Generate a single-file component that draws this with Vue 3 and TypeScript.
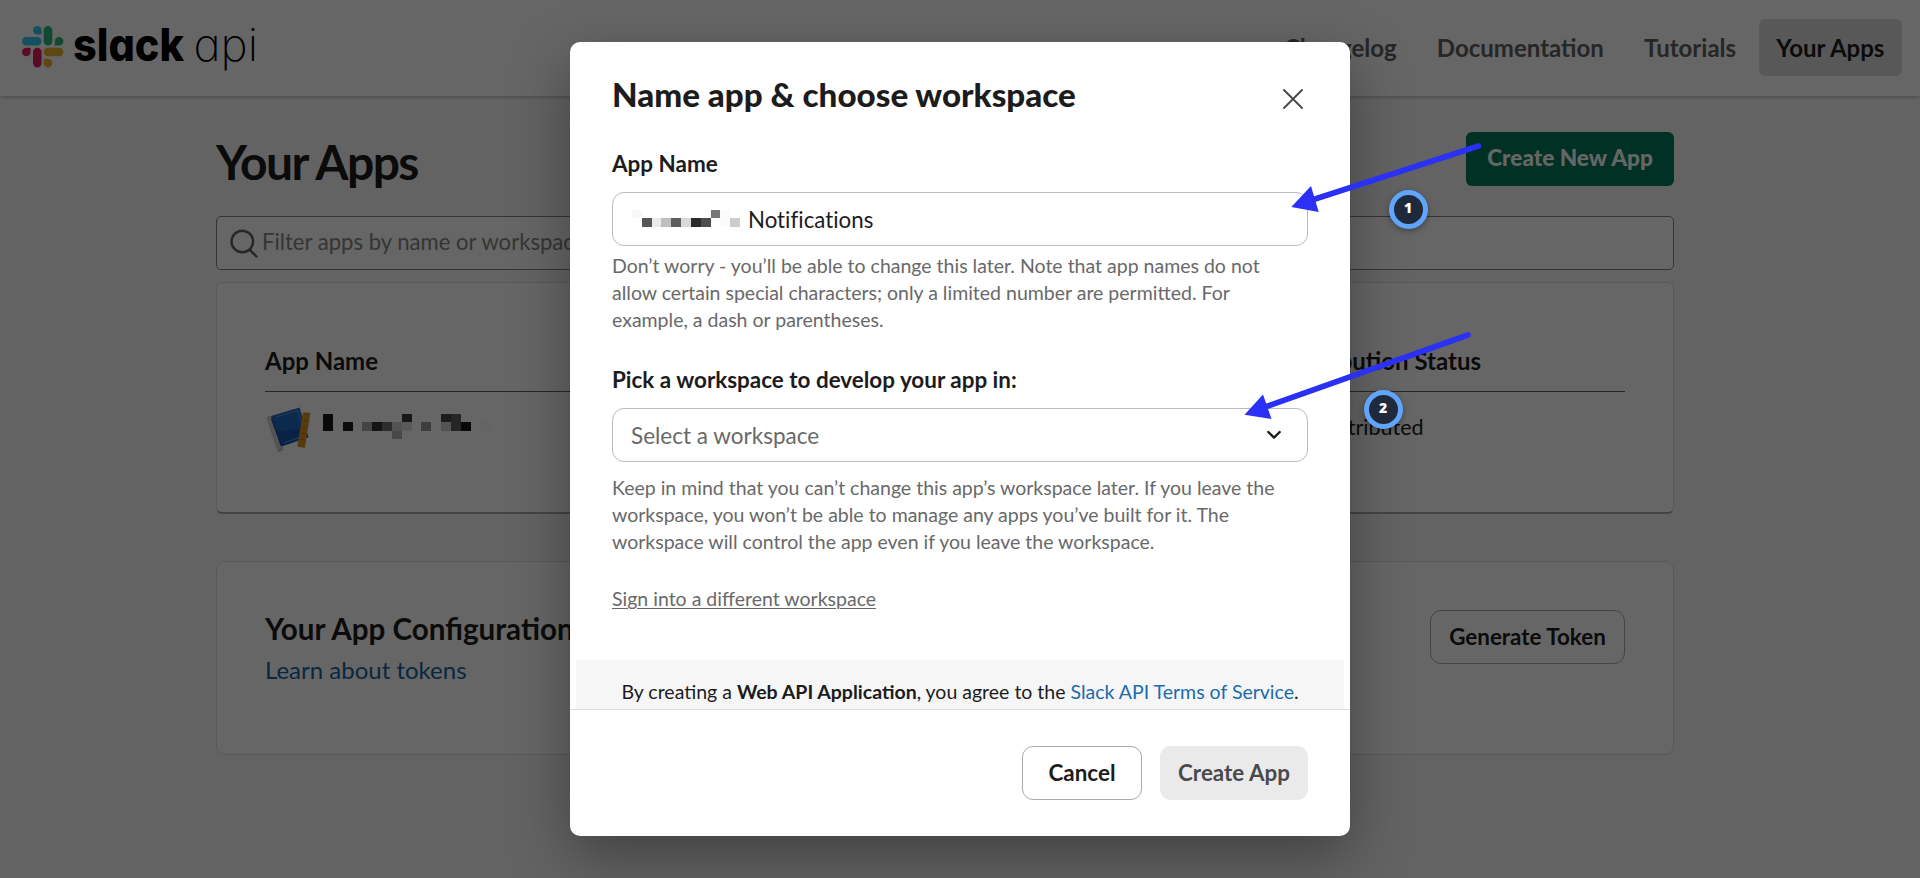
<script setup lang="ts">
import { ref } from 'vue'

type Cell = { x: number; row: number; fill: string }

const navItems = ['Changelog', 'Documentation', 'Tutorials', 'Your Apps']
const activeItem = ref('Your Apps')

const rowTops = [0, 8, 17, 25]

const cell = (x: number, row: number, level: number): Cell => ({
  x,
  row,
  fill: `rgb(${level}, ${level}, ${level})`,
})

const appCells: Cell[] = [
  cell(0, 0, 27), cell(0, 1, 27), cell(20, 1, 30), cell(39, 1, 172), cell(49, 1, 50),
  cell(59, 1, 112), cell(69, 1, 207), cell(69, 2, 180), cell(79, 0, 60), cell(79, 1, 225),
  cell(98, 1, 152), cell(118, 0, 70), cell(118, 1, 210), cell(128, 0, 95), cell(128, 1, 95),
  cell(138, 1, 22), cell(157, 1, 250),
]

const nameCells: Cell[] = [
  cell(0, 0, 248), cell(10, 1, 86), cell(20, 1, 235), cell(29, 1, 191), cell(39, 1, 94),
  cell(49, 1, 217), cell(59, 1, 43), cell(69, 1, 78), cell(79, 0, 119), cell(88, 0, 252),
  cell(88, 1, 251), cell(98, 1, 204),
]
</script>

<template>
  <div class="page">
    <header class="topbar">
      <svg class="logo" width="250" height="60" viewBox="0 0 250 60">
        <g transform="translate(7 8)">
          <path fill="#36c5f0" d="M15.3 0a4.3 4.3 0 0 0 0 8.6h4.3V4.3A4.3 4.3 0 0 0 15.3 0zM15.3 11H4.3a4.3 4.3 0 0 0 0 8.6h11a4.3 4.3 0 0 0 0-8.6z" />
          <path fill="#2eb67d" d="M41.4 15.3a4.3 4.3 0 0 0-8.6 0v4.3h4.3a4.3 4.3 0 0 0 4.3-4.3zM30.3 15.3V4.3a4.3 4.3 0 0 0-8.6 0v11a4.3 4.3 0 0 0 8.6 0z" />
          <path fill="#ecb22e" d="M26 41.4a4.3 4.3 0 0 0 0-8.6h-4.3v4.3a4.3 4.3 0 0 0 4.3 4.3zM26 30.3h11.1a4.3 4.3 0 0 0 0-8.6H26a4.3 4.3 0 0 0 0 8.6z" />
          <path fill="#e01e5a" d="M0 26a4.3 4.3 0 0 0 8.6 0v-4.3H4.3A4.3 4.3 0 0 0 0 26zM11 26v11.1a4.3 4.3 0 0 0 8.6 0V26a4.3 4.3 0 0 0-8.6 0z" />
        </g>
        <text class="brand" x="58" y="43" textLength="111" lengthAdjust="spacingAndGlyphs">slack</text>
        <text class="brand thin" x="178.5" y="43" textLength="64.5" lengthAdjust="spacingAndGlyphs">api</text>
      </svg>
      <nav class="nav">
        <a v-for="item in navItems" :key="item" class="nav-item" :class="{ active: item === activeItem }">{{ item }}</a>
      </nav>
    </header>

    <main class="content">
      <div class="title-row">
        <h1>Your Apps</h1>
        <button class="create">Create New App</button>
      </div>

      <div class="search">
        <svg width="30" height="30" viewBox="0 0 30 30" fill="none" stroke="#616061" stroke-width="2.4" stroke-linecap="round">
          <circle cx="12.3" cy="12.5" r="10.8" />
          <path d="M19.8 20.8L26.5 27.5" />
        </svg>
        <span>Filter apps by name or workspace</span>
      </div>

      <section class="card apps">
        <div class="row head">
          <div>App Name</div>
          <div>Distribution Status</div>
        </div>
        <div class="row">
          <div class="app">
            <svg class="book" width="46" height="46" viewBox="1.2 0 44 44">
              <path fill="#8d8d8d" d="M3 12.5l4-1.5 12 31-5.5 2.5z" opacity=".5" />
              <path fill="#d2d2d2" d="M2.8 10.5L7 9l11.5 29.5-4.8 3z" />
              <path fill="#0b3f8c" d="M6.7 11.5l1.5 1 9.8 24-1.5 2.5z" />
              <path fill="#1f68c4" d="M7 9.5L34.3 1.5 42.7 30 17.5 38.5z" />
              <path fill="#12479a" d="M12 24l28-2 2.7 8-25.2 8.5z" opacity=".5" />
              <path fill="none" stroke="#6d9edb" stroke-width=".8" d="M12 10.5L32.5 4.5 36 16M20 35l16-5.5" />
              <path fill="#d89524" d="M37.6 6l7 .7-5.3 33.4-7.3-1.4z" />
              <path fill="none" stroke="#b27413" stroke-width="1" d="M38.5 14l3.5.5M37.6 20l3.5.5M36.6 26l3.5.5M35.6 32l3.5.5" />
            </svg>
            <svg class="mosaic" width="168" height="26" shape-rendering="crispEdges">
              <rect v-for="(c, i) in appCells" :key="i" :x="c.x" :y="rowTops[c.row]" width="10" :height="rowTops[c.row + 1] - rowTops[c.row]" :fill="c.fill" />
            </svg>
          </div>
          <div class="status">Not distributed</div>
        </div>
      </section>

      <section class="card tokens">
        <div>
          <h2>Your App Configuration Tokens</h2>
          <a class="learn">Learn about tokens</a>
        </div>
        <button class="outline">Generate Token</button>
      </section>
    </main>

    <div class="overlay">
      <div class="modal" role="dialog">
        <div class="body">
          <div class="modal-head">
            <h3>Name app &amp; choose workspace</h3>
            <svg class="close" width="20" height="20" viewBox="0 0 20 20" fill="none" stroke="#454447" stroke-width="1.8" stroke-linecap="round">
              <path d="M1 1l18 18M19 1L1 19" />
            </svg>
          </div>

          <label>App Name</label>
          <div class="field">
            <svg class="mosaic" width="108" height="26" shape-rendering="crispEdges">
              <rect v-for="(c, i) in nameCells" :key="i" :x="c.x" :y="rowTops[c.row]" width="10" :height="rowTops[c.row + 1] - rowTops[c.row]" :fill="c.fill" />
            </svg>
            <span class="value">Notifications</span>
          </div>
          <p class="help first">
            Don’t worry - you’ll be able to change this later. Note that app names do not<br />
            allow certain special characters; only a limited number are permitted. For<br />
            example, a dash or parentheses.
          </p>

          <label>Pick a workspace to develop your app in:</label>
          <div class="field select">
            <span class="placeholder">Select a workspace</span>
            <svg width="16" height="10" viewBox="0 0 16 10" fill="none" stroke="#1d1c1d" stroke-width="2.4" stroke-linecap="round" stroke-linejoin="round">
              <path d="M2.3 2L8 7.6 13.7 2" />
            </svg>
          </div>
          <p class="help second">
            Keep in mind that you can’t change this app’s workspace later. If you leave the<br />
            workspace, you won’t be able to manage any apps you’ve built for it. The<br />
            workspace will control the app even if you leave the workspace.
          </p>
          <a class="signin">Sign into a different workspace</a>

          <div class="terms">
            By creating a <b>Web API Application</b>, you agree to the <a>Slack API Terms of Service</a>.
          </div>
        </div>
        <footer>
          <button class="cancel">Cancel</button>
          <button class="submit">Create App</button>
        </footer>
      </div>
    </div>

    <svg class="annotations" width="1920" height="878" viewBox="0 0 1920 878">
      <g stroke="#2b30f5" stroke-width="5.6" stroke-linecap="round">
        <path d="M1478.5 146L1312 200" />
        <path d="M1468 335L1265 407" />
      </g>
      <path fill="#2b30f5" d="M1291.3 207L1311 186 1318.7 212zM1244.5 414.8L1263 394.5 1271.5 419z" />
    </svg>
    <span class="badge one">1</span>
    <span class="badge two">2</span>
  </div>
</template>

<style>
body {
  background: #f8f8f8;
  overflow: hidden;
}
</style>

<style scoped>
.page {
  position: relative;
  height: 878px;
  overflow: hidden;
  background: #f8f8f8;
  color: #1d1c1d;
  font-family: Lato, "Liberation Sans", sans-serif;
}
h1, h2, h3, p { margin: 0; }
button {
  height: 54px;
  padding: 0 0 2px;
  border: 0;
  font-family: inherit;
  font-size: 22.4px;
  font-weight: 700;
  color: #1d1c1d;
  background: #fff;
  border-radius: 11px;
}
.topbar {
  display: flex;
  align-items: center;
  justify-content: space-between;
  height: 96px;
  padding: 0 18px 0 15px;
  background: #fff;
  box-shadow: 0 1px 4px rgba(0, 0, 0, 0.28);
}
.brand {
  font-family: Inter, "Liberation Sans", sans-serif;
  font-feature-settings: "cv11";
  font-weight: 800;
  font-size: 45px;
  fill: #000;
}
.brand.thin { font-weight: 200; }
.nav { display: flex; gap: 5px; margin-bottom: 1px; }
.nav-item {
  padding: 0 17.6px;
  height: 57px;
  line-height: 57px;
  font-size: 24px;
  font-weight: 700;
  color: #616061;
  border-radius: 6px;
}
.nav-item.active { background: #ddd; color: #1d1c1d; }
.content { width: 1458px; margin-left: 216px; padding-top: 36px; }
.title-row { display: flex; justify-content: space-between; height: 54px; }
h1 {
  font-size: 48px;
  line-height: 60px;
  font-weight: 700;
  letter-spacing: -1.6px;
}
.create {
  width: 208px;
  border-radius: 6px;
  background: #007a5a;
  color: #fff;
  font-size: 22.6px;
  font-weight: 900;
  padding-bottom: 3px;
}
.search {
  display: flex;
  align-items: center;
  box-sizing: border-box;
  height: 54px;
  margin-top: 30px;
  padding-left: 13px;
  border: 1px solid #868686;
  border-radius: 5px;
  background: #fff;
  font-size: 22.1px;
  color: #868686;
}
.search svg { margin-top: 2px; }
.search span { margin: -3px 0 0 2px; }
.card {
  box-sizing: border-box;
  border: 1px solid #ddd;
  background: #fff;
  padding: 0 48px;
}
.apps {
  height: 232px;
  margin-top: 12px;
  padding-top: 63px;
  border-radius: 6px;
  border-bottom: 2px solid #aaa;
}
.row {
  display: grid;
  grid-template-columns: 1fr 345px;
  height: 72px;
  align-items: center;
}
.row.head {
  align-items: start;
  height: 45px;
  border-bottom: 1px solid #616061;
  font-size: 24px;
  line-height: 29px;
  font-weight: 700;
}
.app { display: flex; align-items: center; }
.book { margin-top: 2px; }
.app .mosaic { margin: -3px 0 0 12px; }
.status { font-size: 21.5px; margin-top: -2px; }
.tokens {
  display: flex;
  justify-content: space-between;
  align-items: flex-start;
  height: 194px;
  margin-top: 47px;
  padding-top: 48px;
  border-radius: 9px;
}
h2 { font-size: 29.6px; line-height: 36px; margin-top: 1px; }
.learn {
  display: block;
  margin-top: 5px;
  font-size: 24px;
  line-height: 36px;
  color: #1264a3;
}
.outline { width: 195px; border: 1px solid #aaa; }
.overlay {
  position: absolute;
  inset: 0;
  display: flex;
  align-items: center;
  justify-content: center;
  background: rgba(0, 0, 0, 0.6);
}
.modal {
  display: flex;
  flex-direction: column;
  width: 780px;
  height: 794px;
  border-radius: 10px;
  background: #fff;
  box-shadow: 0 20px 58px rgba(0, 0, 0, 0.35);
}
.body {
  box-sizing: border-box;
  height: 667px;
  padding: 32px 42px 0;
  overflow: hidden;
}
.modal-head { display: flex; justify-content: space-between; height: 76px; }
h3 { font-size: 33.16px; line-height: 40px; font-weight: 900; }
.close { margin: 15px 5px 0 0; }
label { display: block; font-size: 22.45px; line-height: 28px; font-weight: 700; }
.field {
  display: flex;
  align-items: center;
  box-sizing: border-box;
  height: 54px;
  margin-top: 14px;
  padding: 0 26px 0 19px;
  border: 1px solid #bbb;
  border-radius: 12px;
  font-size: 22.3px;
}
.field .value { margin-left: 8px; font-variant-ligatures: none; }
.field .mosaic { margin-top: 7px; }
.select { justify-content: space-between; padding: 0 25px 0 18px; }
.placeholder { font-size: 22.5px; color: #696969; }
.help { font-size: 19.5px; line-height: 27px; color: #696969; }
.help.first { margin: 6px 0 33px; }
.help.second { margin: 12px 0 30px; }
.signin {
  display: block;
  width: max-content;
  font-size: 19.52px;
  line-height: 27px;
  color: #696969;
  text-decoration: underline;
  text-decoration-thickness: 1px;
  text-underline-offset: 2px;
}
.terms {
  margin: 48px -36px 0;
  padding: 18px 0;
  background: #f6f6f6;
  text-align: center;
  font-size: 19.5px;
  line-height: 27px;
}
.terms a { color: #1a6cab; }
footer {
  display: flex;
  justify-content: flex-end;
  gap: 18px;
  padding: 36px 42px 0;
  border-top: 1px solid #ddd;
}
.cancel { width: 120px; border: 1px solid #aaa; }
.submit { width: 148px; background: #eaeaea; color: #4a494b; }
.annotations { position: absolute; inset: 0; }
.badge {
  position: absolute;
  box-sizing: border-box;
  width: 39px;
  height: 39px;
  border: 5px solid #60a5fa;
  border-radius: 50%;
  background: #1e293b;
  box-shadow: 0 2px 6px rgba(0, 0, 0, 0.35);
  color: #fff;
  text-align: center;
  font: 800 14px/25px "Open Sans", sans-serif;
}
.badge.one { left: 1388.5px; top: 189.5px; }
.badge.two { left: 1363.5px; top: 390px; }
</style>
